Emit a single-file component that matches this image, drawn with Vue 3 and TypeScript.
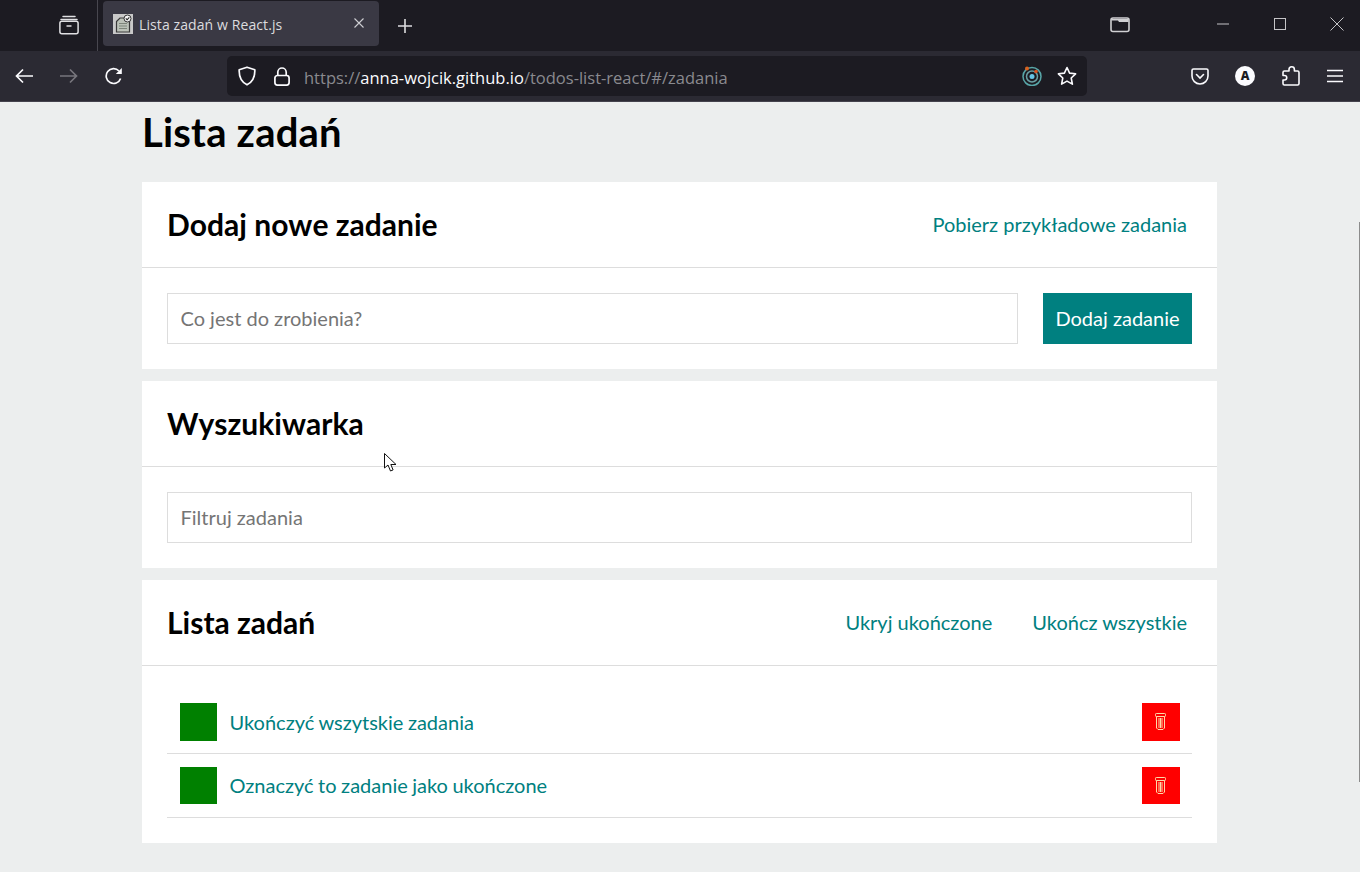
<script setup lang="ts">
const tasks: string[] = ["Ukończyć wszytskie zadania", "Oznaczyć to zadanie jako ukończone"];
</script>

<template>
  <div class="screen">
    <div class="tabbar">
      <svg class="fx-view" width="20" height="20" viewBox="0 0 20 20" fill="none" stroke="#e0e0e3" stroke-width="1.5">
        <path d="M4 1.5h12M2 4.5h16" stroke-linecap="round" />
        <rect x="0.9" y="6.3" width="18.2" height="12.4" rx="2" />
        <path d="M7.5 11h5" />
      </svg>
      <div class="tab-sep"></div>
      <div class="tab">
        <svg class="favicon" width="20" height="20" viewBox="0 0 20 20">
          <rect width="20" height="20" fill="#c9c9c9" />
          <path d="M3.5 7.5 7 4h9.5v14h-13z" fill="#bcc2b8" stroke="#3a3a3a" stroke-width="1.2" />
          <path d="M6 9.5h8M6 12h8M6 14.5h8" stroke="#7d857a" stroke-width="1.2" />
          <circle cx="14.5" cy="4.5" r="3.5" fill="#f4f4f4" stroke="#333" stroke-width="1" />
          <path d="m12.8 4.4 1.3 1.4 2.2-2.5" fill="none" stroke="#222" stroke-width="1.1" />
        </svg>
        <span class="tab-title">Lista zadań w React.js</span>
        <svg class="tab-close" width="10" height="10" viewBox="0 0 10 10" stroke="#cfcfd3" stroke-width="1.1">
          <path d="m0.5 0.5 9 9M9.5 0.5l-9 9" />
        </svg>
      </div>
      <svg class="new-tab" width="16" height="16" viewBox="0 0 16 16" stroke="#dcdcdf" stroke-width="1.6">
        <path d="M8 1v14M1 8h14" />
      </svg>
      <div class="spacer"></div>
      <svg class="tabs-icon" width="20" height="16" viewBox="0 0 20 16" fill="none">
        <rect x="1" y="1" width="18" height="13.5" rx="2" stroke="#d0d0d3" stroke-width="1.6" />
        <path d="M1.5 2h17v3H9L8 3.5H1.5z" fill="#d0d0d3" />
      </svg>
      <div class="win-btn">
        <svg width="12" height="2" viewBox="0 0 12 2"><path d="M0 1h12" stroke="#c4c4c7" /></svg>
      </div>
      <div class="win-btn">
        <svg width="12" height="12" viewBox="0 0 12 12"><rect x="0.5" y="0.5" width="11" height="11" fill="none" stroke="#c4c4c7" /></svg>
      </div>
      <div class="win-btn">
        <svg width="14" height="14" viewBox="0 0 14 14"><path d="m0.5 0.5 13 13M13.5 0.5l-13 13" stroke="#c4c4c7" /></svg>
      </div>
    </div>

    <div class="toolbar">
      <svg class="nav" width="18" height="16" viewBox="0 0 18 16" fill="none" stroke="#fbfbfe" stroke-width="1.7">
        <path d="M18 8H2M8 1.5 1.5 8 8 14.5" />
      </svg>
      <svg class="nav" width="18" height="16" viewBox="0 0 18 16" fill="none" stroke="#77767d" stroke-width="1.7">
        <path d="M0 8h16M10 1.5 16.5 8 10 14.5" />
      </svg>
      <svg class="nav" width="18" height="18" viewBox="0 0 18 18" fill="none" stroke="#fbfbfe" stroke-width="1.7">
        <path d="M15.6 11.5A7.4 7.4 0 1 1 14 4" />
        <path d="M16.8 1v6h-6z" fill="#fbfbfe" stroke="none" />
      </svg>
      <div class="urlbar">
        <svg class="shield" width="18" height="20" viewBox="0 0 18 20" fill="none" stroke="#fbfbfe" stroke-width="1.7">
          <path d="M9 1.2 16.8 3.8c.3 6.7-1.8 12-7.8 15-6-3-8.1-8.3-7.8-15z" stroke-linejoin="round" />
        </svg>
        <svg class="lock" width="16" height="19" viewBox="0 0 16 19" fill="none" stroke="#fbfbfe" stroke-width="1.7">
          <rect x="0.9" y="8.5" width="14.2" height="9.6" rx="2.5" />
          <path d="M3.8 8.5V5.2a4.2 4.2 0 0 1 8.4 0v3.3" />
        </svg>
        <div class="url">
          <span class="url-dim">https://</span><span class="url-host">anna-wojcik.github.io</span><span class="url-dim">/todos-list-react/#/zadania</span>
        </div>
        <svg class="radar" width="20" height="20" viewBox="0 0 20 20" fill="none">
          <circle cx="10" cy="10.5" r="9" stroke="#58a6a8" stroke-width="1.5" />
          <circle cx="10" cy="10.5" r="5.5" stroke="#6a9fa3" stroke-width="1.5" />
          <circle cx="10" cy="10.5" r="2.5" fill="#66c5e6" />
          <circle cx="5" cy="2.5" r="2" fill="#d9621f" />
          <circle cx="14" cy="5.5" r="1.8" fill="#d9521f" />
        </svg>
        <svg class="star" width="20" height="20" viewBox="0 0 20 20" fill="none" stroke="#fbfbfe" stroke-width="1.6">
          <path d="m10 1.5 2.6 5.6 6 .7-4.4 4.2 1.2 6.1-5.4-3-5.4 3 1.2-6.1L1.4 7.8l6-.7z" stroke-linejoin="round" />
        </svg>
      </div>
      <div class="spacer"></div>
      <svg class="pocket" width="18" height="17" viewBox="0 0 18 17" fill="none" stroke="#fbfbfe" stroke-width="1.6">
        <path d="M2.5 1h13A1.5 1.5 0 0 1 17 2.5V8a8 8 0 0 1-16 0V2.5A1.5 1.5 0 0 1 2.5 1z" />
        <path d="m5.5 6.5 3.5 3.5 3.5-3.5" stroke-linecap="round" />
      </svg>
      <div class="avatar">A</div>
      <svg class="puzzle" width="18" height="20" viewBox="0 0 18 20" fill="none" stroke="#fbfbfe" stroke-width="1.6">
        <path d="M7 5V3.5a2.7 2.7 0 0 1 5.4 0V5h3.2A1.4 1.4 0 0 1 17 6.4v11.2a1.4 1.4 0 0 1-1.4 1.4H2.4A1.4 1.4 0 0 1 1 17.600V14h1.500a2.200 2.200 0 0 0 0-4.500H1V6.400A1.400 1.400 0 0 1 2.400 5z" stroke-linejoin="round" />
      </svg>
      <svg class="menu" width="16" height="14" viewBox="0 0 16 14" stroke="#fbfbfe" stroke-width="1.6">
        <path d="M0 1.5h16M0 7h16M0 12.5h16" />
      </svg>
    </div>

    <main class="page">
      <h1 class="page-title">Lista zadań</h1>

      <section class="section">
        <header class="section-head">
          <h2>Dodaj nowe zadanie</h2>
          <div class="head-links">
            <a class="link">Pobierz przykładowe zadania</a>
          </div>
        </header>
        <form class="section-body add-form" @submit.prevent>
          <input class="field" placeholder="Co jest do zrobienia?" />
          <button class="add-btn">Dodaj zadanie</button>
        </form>
      </section>

      <section class="section">
        <header class="section-head">
          <h2>Wyszukiwarka</h2>
        </header>
        <div class="section-body">
          <input class="field" placeholder="Filtruj zadania" />
        </div>
      </section>

      <section class="section">
        <header class="section-head">
          <h2>Lista zadań</h2>
          <div class="head-links">
            <a class="link">Ukryj ukończone</a>
            <a class="link">Ukończ wszystkie</a>
          </div>
        </header>
        <ul class="section-body tasks">
          <li v-for="task in tasks" :key="task" class="task">
            <button class="done-btn"></button>
            <a class="task-name">{{ task }}</a>
            <button class="remove-btn">
              <svg width="11" height="17" viewBox="0 0 11 17" fill="none" stroke="#ffd9a8" stroke-width="1">
                <rect x="0.5" y="0.5" width="10" height="3" rx="0.8" />
                <path d="M1.5 3.5V15L3 16.5h5L9.5 15V3.5M4 5v10M5.5 5v10M7 5v10" />
              </svg>
            </button>
          </li>
        </ul>
      </section>
    </main>

    <div class="scrollbar"></div>
    <svg class="cursor" width="13" height="20" viewBox="0 0 13 20" fill="#fff" stroke="#111" stroke-width="1">
      <path d="M0.5 0.5V15L4 12l2.5 6 2.600-1.100L6.800 11.500H12z" />
    </svg>
  </div>
</template>

<style scoped>
.screen {
  position: relative;
  height: 872px;
  overflow: hidden;
  background: #eceeee;
  font-family: Lato, "Open Sans", sans-serif;
}

.tabbar {
  display: flex;
  align-items: center;
  height: 51px;
  background: #1c1b22;
}

.fx-view {
  margin-left: 59px;
  margin-top: -1px;
}

.tab-sep {
  width: 1px;
  height: 51px;
  margin-left: 18px;
  background: #48474f;
}

.tab {
  display: flex;
  align-items: center;
  width: 276px;
  height: 45px;
  margin-left: 5px;
  margin-top: -4px;
  padding-left: 10px;
  box-sizing: border-box;
  border-radius: 4px;
  background: #3a3944;
}

.favicon {
  flex: none;
}

.tab-title {
  margin-left: 6px;
  margin-top: 2px;
  flex: 1;
  color: #dcdcdf;
  font-family: "Open Sans", sans-serif;
  font-size: 14px;
  letter-spacing: 0.1px;
}

.tab-close {
  margin-right: 15px;
  margin-top: -2px;
}

.new-tab {
  margin-left: 18px;
}

.spacer {
  flex: 1;
}

.tabs-icon {
  margin-right: 59px;
  margin-top: -2px;
}

.win-btn {
  display: flex;
  align-items: center;
  justify-content: center;
  width: 46px;
  height: 16px;
  margin-left: 11px;
  margin-top: -4px;
}

.toolbar {
  display: flex;
  align-items: center;
  height: 50px;
  padding-left: 15px;
  background: #2b2a33;
  border-bottom: 1px solid #44434d;
}

.nav {
  flex: none;
  margin-right: 27px;
}

.urlbar {
  display: flex;
  align-items: center;
  width: 860px;
  height: 40px;
  margin-left: 77px;
  padding-left: 11px;
  box-sizing: border-box;
  border-radius: 5px;
  background: #1c1b22;
}

.shield {
  flex: none;
}

.lock {
  flex: none;
  margin-left: 18px;
}

.url {
  flex: 1;
  margin-left: 14px;
  margin-top: 3px;
  font-family: "Open Sans", sans-serif;
  font-size: 16.5px;
  white-space: nowrap;
}

.url-dim {
  color: #8a8a8f;
}

.url-host {
  color: #fbfbfe;
}

.radar {
  flex: none;
  margin-right: 15px;
}

.star {
  flex: none;
  margin-right: 10px;
}

.pocket {
  flex: none;
  margin-right: 26px;
}

.avatar {
  flex: none;
  width: 20px;
  height: 20px;
  border-radius: 50%;
  margin-right: 27px;
  background: #fbfbfe;
  color: #1c1b22;
  font-family: "Open Sans", sans-serif;
  font-size: 12px;
  font-weight: 800;
  line-height: 20px;
  text-align: center;
}

.puzzle {
  flex: none;
  margin-right: 27px;
}

.menu {
  flex: none;
  margin-right: 17px;
}

.page {
  width: 1075px;
  margin-left: 142px;
  padding-top: 6px;
}

.page-title {
  margin: 0 0 26px;
  font-size: 40px;
  font-weight: 700;
  line-height: 48px;
  letter-spacing: 0.2px;
  color: #000;
}

.section {
  margin-bottom: 12px;
  background: #fff;
}

.section-head {
  display: flex;
  align-items: center;
  justify-content: space-between;
  height: 83px;
  padding: 0 25px 2px;
  border-bottom: 1px solid #ddd;
}

.section-head h2 {
  margin: 0;
  font-size: 30px;
  font-weight: 700;
  font-kerning: none;
  color: #000;
}

.head-links {
  display: flex;
  gap: 40px;
  margin-right: 5px;
}

.link {
  color: #008080;
  font-size: 20px;
  cursor: pointer;
}

.section-body {
  padding: 25px;
}

.add-form {
  display: flex;
  gap: 25px;
}

.field {
  flex: 1;
  display: block;
  width: 100%;
  height: 51px;
  padding: 0 12.5px 2px;
  box-sizing: border-box;
  border: 1px solid #ddd;
  outline: none;
  color: #000;
  font-family: inherit;
  font-size: 20px;
}

.field::placeholder {
  color: #757575;
}

.add-btn {
  flex: none;
  width: 149px;
  height: 51px;
  padding: 0 0 2px;
  border: none;
  background: #008080;
  color: #fff;
  font-family: inherit;
  font-size: 20px;
}

.tasks {
  margin: 0;
  padding-top: 24.5px;
  list-style: none;
}

.task {
  display: flex;
  align-items: center;
  gap: 12.5px;
  padding: 12.5px;
  border-bottom: 1px solid #ddd;
}

.done-btn {
  flex: none;
  width: 37.5px;
  height: 37.5px;
  padding: 0;
  border: none;
  background: #008000;
}

.task-name {
  flex: 1;
  color: #008080;
  font-size: 20px;
  word-spacing: -0.6px;
}

.remove-btn {
  display: flex;
  align-items: center;
  justify-content: center;
  flex: none;
  width: 37.5px;
  height: 37.5px;
  padding: 0;
  border: none;
  background: #f00;
}

.scrollbar {
  position: absolute;
  top: 222px;
  right: 0;
  width: 1px;
  height: 560px;
  background: #8c8c8c;
}

.cursor {
  position: absolute;
  left: 384px;
  top: 453px;
}
</style>

<style>
html,
body {
  margin: 0;
  overflow: hidden;
}
</style>
